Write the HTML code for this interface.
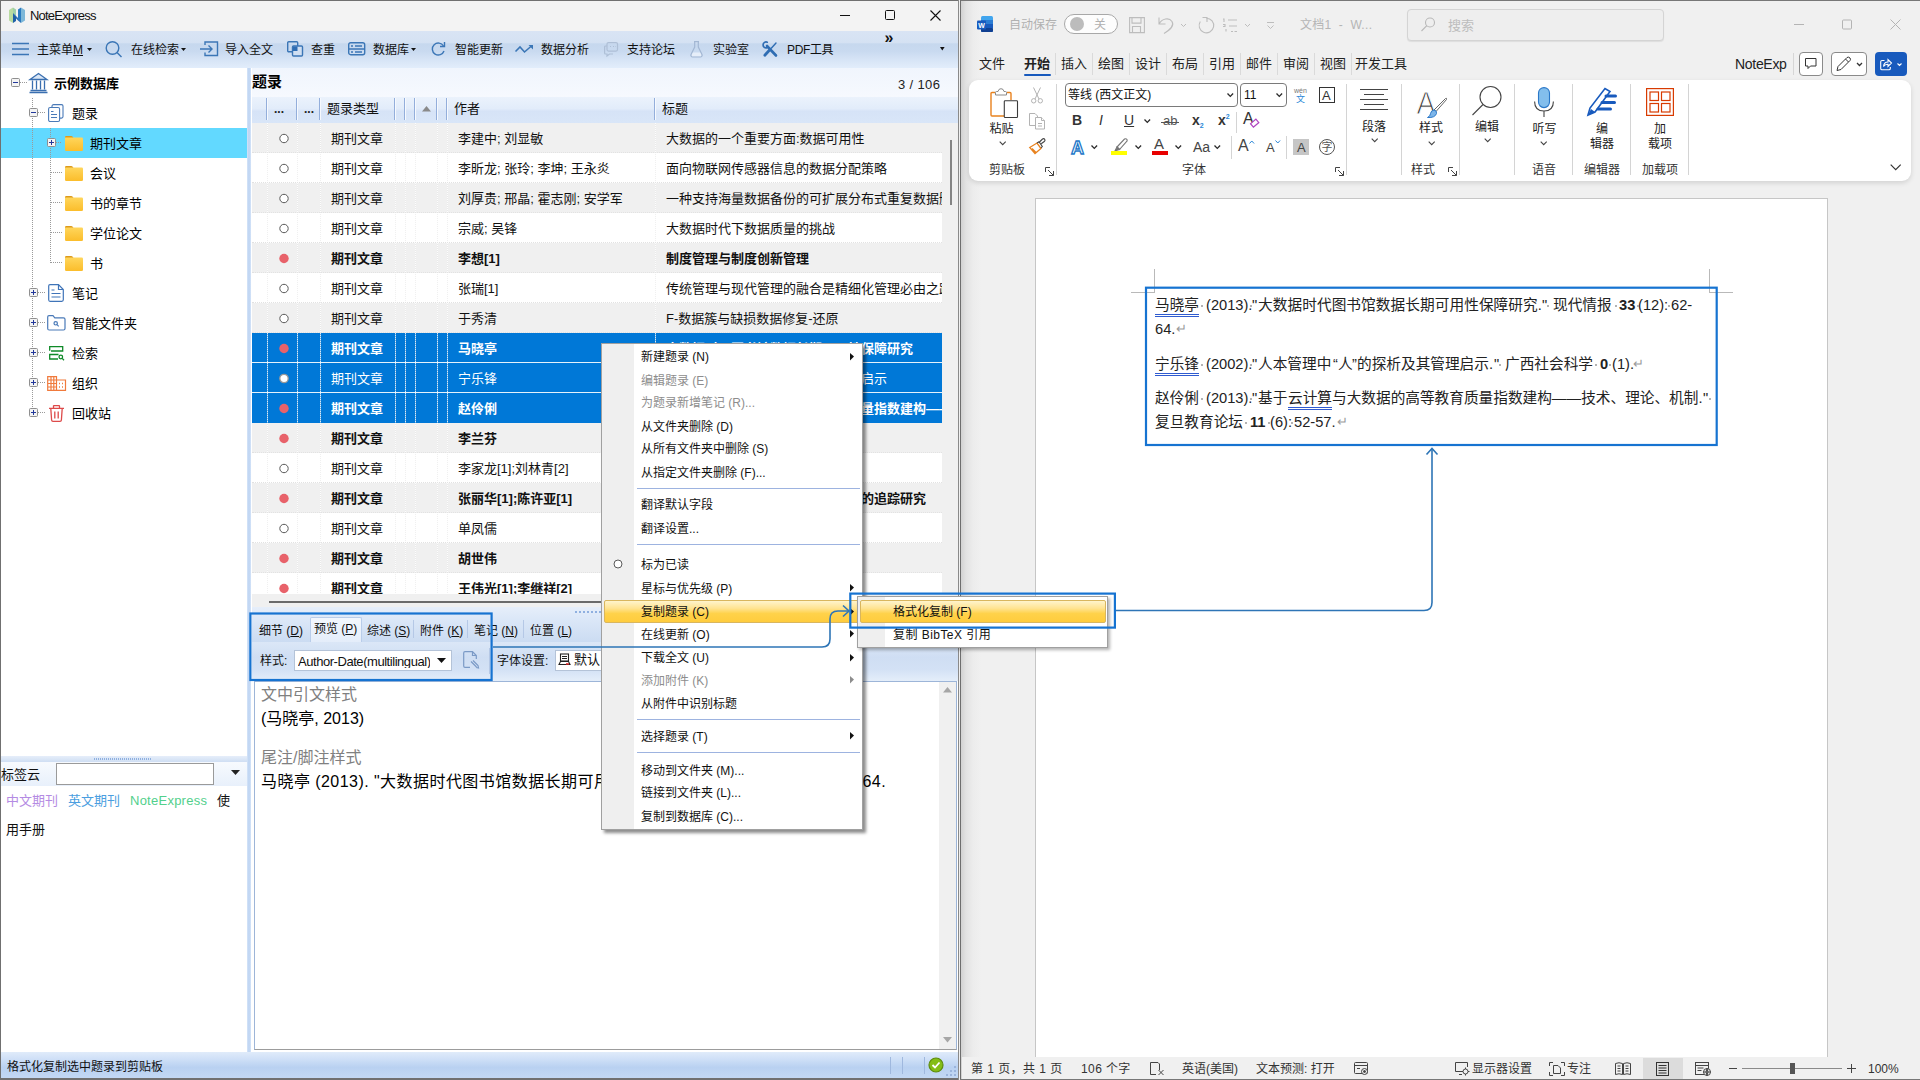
<!DOCTYPE html>
<html lang="zh-CN">
<head>
<meta charset="utf-8">
<title>NoteExpress</title>
<style>
*{box-sizing:border-box;margin:0;padding:0}
html,body{width:1920px;height:1080px;overflow:hidden;background:#f0f0f0}
body{font-family:"Liberation Sans","Noto Sans CJK SC",sans-serif;font-size:12px;color:#000;position:relative}
.a{position:absolute}
.t{position:absolute;white-space:nowrap;line-height:1}
svg{position:absolute;overflow:visible}
b{font-weight:bold}
/* ---------- NoteExpress window ---------- */
#ne{position:absolute;left:0;top:0;width:959px;height:1080px;background:#fff;overflow:hidden}
#ne-title{position:absolute;left:0;top:0;width:959px;height:31px;background:#f3f3f3}
#ne-tb{position:absolute;left:0;top:31px;width:959px;height:37px;background:linear-gradient(#d9e4f4 0%,#d5e2f3 31%,#c6d8ee 35%,#c9daf0 55%,#d9e6f7 82%,#e2edfb 100%)}
.tb{font-size:12px;top:43px;color:#111;margin-top:.5px}
.ic{stroke:#3b76b6;fill:none;stroke-width:1.4}
.vd{width:1px;background:repeating-linear-gradient(#9a9a9a 0 1px,transparent 1px 2px)}
.hd{height:1px;background:repeating-linear-gradient(90deg,#9a9a9a 0 1px,transparent 1px 2px)}
.r{position:absolute;left:0;width:690px;height:30px;font-size:13px;color:#111;white-space:nowrap;border-bottom:1px dotted #e2e2e2}
.r span{position:absolute;top:9px;line-height:1}
.r.b{font-weight:bold}
.r.s{color:#fff;border-bottom:none}
.vdl{width:1px;background:repeating-linear-gradient(rgba(255,255,255,.85) 0 1px,rgba(225,225,225,.5) 1px 2px)}
.tab{font-size:12px;color:#111;margin-top:1px}
.pv{font-size:16px;color:#000;margin-top:1px}
.mi{font-size:12px;color:#111;margin-top:1px}
.hl{background:linear-gradient(#fff4cc 0%,#ffe391 35%,#ffd24a 60%,#ffcc3d 100%);border:1px solid #d9b65e;border-radius:2px}
.wt{font-size:13px;color:#222;top:57px}
.ts{top:53px;width:1px;height:22px;background:#dadada}
.rl{font-size:12px;color:#333;top:164px}
.gs{top:84px;width:1px;height:91px;background:#d4d4d4}
.d{position:absolute;white-space:nowrap;line-height:1;font-size:14.67px;color:#222}
.gu{border-bottom:3px double #2f5bd0;padding-bottom:1px}
.pm{color:#9a9a9a;font-size:13px;margin-top:-1px}
.ws{font-size:12px;color:#333;top:1062.500px}
.q{display:inline-block;width:13px;font-style:normal;text-align:center}
.tr{margin-top:.8px}
.sp{position:absolute;width:1.500px;height:1.500px;background:#9a9a9a;border-radius:1px}
</style>
</head>
<body>
<div id="ne">
<div id="ne-title"></div>
<div id="ne-tb"></div>
<!-- app icon -->
<svg style="left:9px;top:7px" width="16" height="16" viewBox="0 0 16 16">
  <polygon points="0,3 4,0.5 4,16 0,13.5" fill="#b9dba0"/>
  <polygon points="4,0.5 7,2.5 7,10 4,7" fill="#9fd0a8"/>
  <polygon points="4,6 12,14 12,16 9,13.5 4,8.5" fill="#2f6fb5"/>
  <polygon points="4,7 7,10 7,14 4,16" fill="#1f5fa8"/>
  <polygon points="9,2.5 12,0.5 12,15 9,12" fill="#2a7ac0"/>
  <polygon points="12,0.5 16,3 16,13.5 12,16" fill="#7db7d8"/>
</svg>
<div class="t" style="left:30px;top:8.500px;font-size:13px;color:#111;letter-spacing:-.8px">NoteExpress</div>
<!-- window controls -->
<svg style="left:839px;top:9px" width="110" height="14" viewBox="0 0 110 14">
  <path d="M1 6.500h10" stroke="#111" stroke-width="1" fill="none"/>
  <rect x="46.5" y="1.5" width="9" height="9" rx="1" stroke="#111" stroke-width="1" fill="none"/>
  <path d="M91.500 1.500l10 10M101.500 1.500l-10 10" stroke="#111" stroke-width="1.100" fill="none"/>
</svg>
<!-- toolbar -->
<svg class="ic" style="left:12px;top:42px" width="18" height="14"><path d="M0 1.500h17M0 7h17M0 12.500h17"/></svg>
<div class="t tb" style="left:37px">主菜单<u>M</u></div>
<svg style="left:87px;top:48px" width="6" height="4"><polygon points="0,0 5,0 2.500,3" fill="#111"/></svg>
<svg class="ic" style="left:105px;top:40px" width="18" height="18"><circle cx="7.500" cy="8" r="6.300"/><path d="M12 12.500l4.500 4.500"/></svg>
<div class="t tb" style="left:131px">在线检索</div>
<svg style="left:181px;top:48px" width="6" height="4"><polygon points="0,0 5,0 2.500,3" fill="#111"/></svg>
<svg class="ic" style="left:200px;top:41px" width="19" height="16"><path d="M5 4V1h12.500v13.500H5v-3"/><path d="M0 8h12M8.500 4.500L12 8l-3.500 3.500"/></svg>
<div class="t tb" style="left:225px">导入全文</div>
<svg class="ic" style="left:287px;top:41px" width="17" height="16"><rect x="0.700" y="0.700" width="10" height="10" rx="1"/><rect x="5.500" y="5" width="10" height="10" rx="1" fill="#d0dff2"/><rect x="6" y="5.500" width="4.500" height="4.500" fill="#2f6db3" stroke="none"/></svg>
<div class="t tb" style="left:311px">查重</div>
<svg class="ic" style="left:348px;top:42px" width="18" height="14"><rect x="0.700" y="0.700" width="16" height="12" rx="2"/><path d="M1 7h15.500M3 4h2M7 4h7M3 10h2M7 10h7"/></svg>
<div class="t tb" style="left:373px">数据库</div>
<svg style="left:411px;top:48px" width="6" height="4"><polygon points="0,0 5,0 2.500,3" fill="#111"/></svg>
<svg class="ic" style="left:431px;top:41px" width="15" height="16"><path d="M12.500 5A6 6 0 1 0 13 10"/><path d="M13.500 1v4.500H9"/></svg>
<div class="t tb" style="left:455px">智能更新</div>
<svg class="ic" style="left:515px;top:44px" width="20" height="10"><path d="M0.500 7.500L5 3l4.500 5L17 1.500" stroke-width="1.600"/><path d="M13.500 1H18v4.500z" fill="#3b76b6" stroke="none"/></svg>
<div class="t tb" style="left:541px">数据分析</div>
<svg style="left:604px;top:42px" width="15" height="15" fill="none" stroke="#aebfd6" stroke-width="1.200"><rect x="3" y="0.600" width="10.500" height="8.500" rx="1.500"/><path d="M3 4H1.600a1 1 0 0 0-1 1v6a1 1 0 0 0 1 1H3v2l2.500-2H9"/><path d="M6 4.500h1M9 4.500h1M11 4.500h.5"/></svg>
<div class="t tb" style="left:627px">支持论坛</div>
<svg style="left:690px;top:41px" width="13" height="17" fill="none" stroke="#a3b7d3" stroke-width="1.200"><path d="M2.500 11.500h8l1 2.500q.3 1.500-1.200 1.500H2.700q-1.500 0-1.200-1.500z" fill="#e6eef9" stroke="none"/><path d="M4 0.600h5M4.700 1v5L1 13.500a1.800 1.800 0 0 0 1.700 2.500h7.600a1.800 1.800 0 0 0 1.700-2.500L8.300 6V1"/></svg>
<div class="t tb" style="left:713px">实验室</div>
<svg style="left:762px;top:41px" width="17" height="17" fill="none" stroke="#2f6db3" stroke-linecap="round"><path d="M5 5l9 9.500" stroke-width="2.600"/><path d="M5.300 1.200a3 3 0 1 0 -0.300 5.600" stroke-width="1.700"/><path d="M14 2L9.500 7" stroke-width="1.400"/><path d="M8.300 8.300L2.800 14.200" stroke-width="2.800"/></svg>
<div class="t tb" style="left:787px;letter-spacing:-.35px">PDF工具</div>
<div class="t" style="left:884.500px;top:30px;font-size:16px;font-weight:bold;color:#111">»</div>
<svg style="left:939.500px;top:46.500px" width="6" height="4"><polygon points="0,0 4.600,0 2.300,3.500" fill="#111"/></svg>
<!-- ===== tree panel ===== -->
<div class="a" style="left:1px;top:68px;width:246px;height:985px;background:#fff"></div>
<div class="a" style="left:1px;top:128px;width:246px;height:30px;background:#62d9ff"></div>
<div class="a vd" style="left:32px;top:98px;height:315px"></div>
<div class="a vd" style="left:50px;top:128px;height:136px"></div>
<svg width="0" height="0"><defs><linearGradient id="fg" x1="0" y1="0" x2="0" y2="1"><stop offset="0" stop-color="#ffd65c"/><stop offset="1" stop-color="#fbbd2b"/></linearGradient></defs></svg>
<div class="a hd" style="left:20px;top:82px;width:7px"></div>
<svg style="left:11px;top:78px" width="9" height="9"><rect x="0.500" y="0.500" width="8" height="8" rx="1" fill="#f4f4f4" stroke="#8f8f8f"/><path d="M2 4.500h5" stroke="#23399b" stroke-width="1" fill="none"/></svg>
<svg style="left:29px;top:72px" width="19" height="22" fill="none" stroke="#3a6fb0" stroke-width="1.300"><path d="M1 7.500L9.500 1.500L18 7.500z" fill="#dbe7f6"/><path d="M3.500 8.500v9M7.500 8.500v9M11.500 8.500v9M15.500 8.500v9"/><path d="M1.500 18.500h16M0.500 20.500h18" stroke-width="1.600"/></svg>
<div class="t tr" style="left:54px;top:76px;font-size:13px;font-weight:bold">示例数据库</div>
<div class="a hd" style="left:38px;top:112px;width:8px"></div>
<svg style="left:29px;top:108px" width="9" height="9"><rect x="0.500" y="0.500" width="8" height="8" rx="1" fill="#f4f4f4" stroke="#8f8f8f"/><path d="M2 4.500h5" stroke="#23399b" stroke-width="1" fill="none"/></svg>
<svg style="left:48px;top:104px" width="16" height="18" fill="#fff" stroke="#4a7ab8" stroke-width="1.100"><rect x="4" y="0.600" width="11" height="13.500" rx="1.500"/><rect x="0.600" y="3.500" width="11" height="14" rx="1.500"/><path d="M3 7.500h2.500M3 10.500h6M3 13.500h6"/></svg>
<div class="t tr" style="left:72px;top:106px;font-size:13px">题录</div>
<div class="a hd" style="left:56px;top:142px;width:6px"></div>
<svg style="left:47px;top:138px" width="9" height="9"><rect x="0.500" y="0.500" width="8" height="8" rx="1" fill="#f4f4f4" stroke="#8f8f8f"/><path d="M2 4.500h5M4.500 2v5" stroke="#23399b" stroke-width="1" fill="none"/></svg>
<svg style="left:65px;top:136px" width="18" height="15"><path d="M0 1.200Q0 0 1.200 0H6.300Q7 0 7.500 .6L8.500 2H0z" fill="#dc9a1c"/><path d="M0 1.500H16.800Q18 1.500 18 2.700V13.800Q18 15 16.800 15H1.200Q0 15 0 13.800z" fill="url(#fg)"/></svg>
<div class="t tr" style="left:90px;top:136px;font-size:13px">期刊文章</div>
<div class="a hd" style="left:51px;top:172px;width:11px"></div>
<svg style="left:65px;top:166px" width="18" height="15"><path d="M0 1.200Q0 0 1.200 0H6.300Q7 0 7.500 .6L8.500 2H0z" fill="#dc9a1c"/><path d="M0 1.500H16.800Q18 1.500 18 2.700V13.800Q18 15 16.800 15H1.200Q0 15 0 13.800z" fill="url(#fg)"/></svg>
<div class="t tr" style="left:90px;top:166px;font-size:13px">会议</div>
<div class="a hd" style="left:51px;top:202px;width:11px"></div>
<svg style="left:65px;top:196px" width="18" height="15"><path d="M0 1.200Q0 0 1.200 0H6.300Q7 0 7.500 .6L8.500 2H0z" fill="#dc9a1c"/><path d="M0 1.500H16.800Q18 1.500 18 2.700V13.800Q18 15 16.800 15H1.200Q0 15 0 13.800z" fill="url(#fg)"/></svg>
<div class="t tr" style="left:90px;top:196px;font-size:13px">书的章节</div>
<div class="a hd" style="left:51px;top:232px;width:11px"></div>
<svg style="left:65px;top:226px" width="18" height="15"><path d="M0 1.200Q0 0 1.200 0H6.300Q7 0 7.500 .6L8.500 2H0z" fill="#dc9a1c"/><path d="M0 1.500H16.800Q18 1.500 18 2.700V13.800Q18 15 16.800 15H1.200Q0 15 0 13.800z" fill="url(#fg)"/></svg>
<div class="t tr" style="left:90px;top:226px;font-size:13px">学位论文</div>
<div class="a hd" style="left:51px;top:262px;width:11px"></div>
<svg style="left:65px;top:256px" width="18" height="15"><path d="M0 1.200Q0 0 1.200 0H6.300Q7 0 7.500 .6L8.500 2H0z" fill="#dc9a1c"/><path d="M0 1.500H16.800Q18 1.500 18 2.700V13.800Q18 15 16.800 15H1.200Q0 15 0 13.800z" fill="url(#fg)"/></svg>
<div class="t tr" style="left:90px;top:256px;font-size:13px">书</div>
<div class="a hd" style="left:38px;top:292px;width:7px"></div>
<svg style="left:29px;top:288px" width="9" height="9"><rect x="0.500" y="0.500" width="8" height="8" rx="1" fill="#f4f4f4" stroke="#8f8f8f"/><path d="M2 4.500h5M4.500 2v5" stroke="#23399b" stroke-width="1" fill="none"/></svg>
<svg style="left:48px;top:284px" width="16" height="18" fill="none" stroke="#3f74b8" stroke-width="1.200"><path d="M2 0.700H10.500L15.300 5.500V15.800Q15.300 17.300 13.800 17.300H2Q0.700 17.300 0.700 15.800V2Q0.700 0.700 2 0.700z"/><path d="M10.500 1V5.500H15"/><path d="M3.500 6h3M3.500 9.500h9M3.500 13h9"/></svg>
<div class="t tr" style="left:72px;top:286px;font-size:13px">笔记</div>
<div class="a hd" style="left:38px;top:322px;width:7px"></div>
<svg style="left:29px;top:318px" width="9" height="9"><rect x="0.500" y="0.500" width="8" height="8" rx="1" fill="#f4f4f4" stroke="#8f8f8f"/><path d="M2 4.500h5M4.500 2v5" stroke="#23399b" stroke-width="1" fill="none"/></svg>
<svg style="left:47px;top:315px" width="19" height="16" fill="none" stroke="#4a7ab8" stroke-width="1.200"><path d="M0.700 3V2Q0.700 0.700 2 0.700H6L7.800 2.800H16.500Q18 2.800 18 4.300V13.500Q18 15 16.500 15H2.200Q0.700 15 0.700 13.500z"/><circle cx="8.700" cy="8.300" r="1.700"/><path d="M10 9.700l1.700 1.700"/></svg>
<div class="t tr" style="left:72px;top:316px;font-size:13px">智能文件夹</div>
<div class="a hd" style="left:38px;top:352px;width:7px"></div>
<svg style="left:29px;top:348px" width="9" height="9"><rect x="0.500" y="0.500" width="8" height="8" rx="1" fill="#f4f4f4" stroke="#8f8f8f"/><path d="M2 4.500h5M4.500 2v5" stroke="#23399b" stroke-width="1" fill="none"/></svg>
<svg style="left:49px;top:346px" width="16" height="15" fill="none" stroke="#0f8a28" stroke-width="1.300"><path d="M0.700 4.700V0.700H13.700V5H2"/><path d="M9.500 8.500H0.700V13H9"/><circle cx="11.800" cy="11" r="1.800"/><path d="M13.200 12.400l1.800 1.800"/></svg>
<div class="t tr" style="left:72px;top:346px;font-size:13px">检索</div>
<div class="a hd" style="left:38px;top:382px;width:7px"></div>
<svg style="left:29px;top:378px" width="9" height="9"><rect x="0.500" y="0.500" width="8" height="8" rx="1" fill="#f4f4f4" stroke="#8f8f8f"/><path d="M2 4.500h5M4.500 2v5" stroke="#23399b" stroke-width="1" fill="none"/></svg>
<svg style="left:47px;top:376px" width="20" height="15" fill="none" stroke="#f07a3c" stroke-width="1.200"><path d="M0.700 0.700H9.500V14.300H0.700zM9.500 4H18.500V14.300H9.500M0.700 4H9.500M0.700 7.500H9.500M0.700 11H9.500M4 0.700V14.300M6.800 0.700V14.300"/><path d="M12 7.500h1M15 7.500h1M12 11h1M15 11h1" stroke-width="1.400"/></svg>
<div class="t tr" style="left:72px;top:376px;font-size:13px">组织</div>
<div class="a hd" style="left:38px;top:412px;width:7px"></div>
<svg style="left:29px;top:408px" width="9" height="9"><rect x="0.500" y="0.500" width="8" height="8" rx="1" fill="#f4f4f4" stroke="#8f8f8f"/><path d="M2 4.500h5M4.500 2v5" stroke="#23399b" stroke-width="1" fill="none"/></svg>
<svg style="left:49px;top:405px" width="15" height="17" fill="none" stroke="#dd4a4a" stroke-width="1.300"><path d="M0 3.300H15M4.500 3V1.200Q4.500 0.700 5 0.700H10Q10.500 0.700 10.500 1.200V3"/><path d="M1.800 3.500L2.600 15Q2.700 16.300 4 16.300H11Q12.300 16.300 12.400 15L13.200 3.500"/><path d="M5.800 6.500v7M9.200 6.500v7"/></svg>
<div class="t tr" style="left:72px;top:406px;font-size:13px">回收站</div>
<div class="a" style="left:247px;top:68px;width:4px;height:985px;background:linear-gradient(90deg,#d5e4f8,#bcd3f2 50%,#d5e4f8)"></div>
<!-- ===== main panel: header + table ===== -->
<div class="a" style="left:252px;top:68px;width:707px;height:29px;background:linear-gradient(#f0f5fd,#f6f9fe)"></div>
<div class="t" style="left:252px;top:74px;font-size:15px;font-weight:bold">题录</div>
<div class="t" style="left:898px;top:78px;font-size:13px;color:#222;letter-spacing:.35px">3 / 106</div>
<div class="a" style="left:252px;top:97px;width:707px;height:26px;background:linear-gradient(#ebf2fc 0%,#e2ecfa 45%,#d6e3f7 55%,#d9e6f8 100%)"></div>
<div class="a" style="left:266px;top:98px;width:1px;height:22px;background:#93aedb"></div><div class="a" style="left:267px;top:98px;width:1px;height:22px;background:#f6f9fe"></div>
<div class="a" style="left:296px;top:98px;width:1px;height:22px;background:#93aedb"></div><div class="a" style="left:297px;top:98px;width:1px;height:22px;background:#f6f9fe"></div>
<div class="a" style="left:319px;top:98px;width:1px;height:22px;background:#93aedb"></div><div class="a" style="left:320px;top:98px;width:1px;height:22px;background:#f6f9fe"></div>
<div class="a" style="left:394px;top:98px;width:1px;height:22px;background:#93aedb"></div><div class="a" style="left:395px;top:98px;width:1px;height:22px;background:#f6f9fe"></div>
<div class="a" style="left:404px;top:98px;width:1px;height:22px;background:#93aedb"></div><div class="a" style="left:405px;top:98px;width:1px;height:22px;background:#f6f9fe"></div>
<div class="a" style="left:414px;top:98px;width:1px;height:22px;background:#93aedb"></div><div class="a" style="left:415px;top:98px;width:1px;height:22px;background:#f6f9fe"></div>
<div class="a" style="left:436px;top:98px;width:1px;height:22px;background:#93aedb"></div><div class="a" style="left:437px;top:98px;width:1px;height:22px;background:#f6f9fe"></div>
<div class="a" style="left:446px;top:98px;width:1px;height:22px;background:#93aedb"></div><div class="a" style="left:447px;top:98px;width:1px;height:22px;background:#f6f9fe"></div>
<div class="a" style="left:654px;top:98px;width:1px;height:22px;background:#93aedb"></div><div class="a" style="left:655px;top:98px;width:1px;height:22px;background:#f6f9fe"></div>
<div class="t" style="left:274px;top:102.500px;font-size:12px;font-weight:bold;color:#222">...</div>
<div class="t" style="left:304px;top:102.500px;font-size:12px;font-weight:bold;color:#222">...</div>
<div class="t" style="left:327px;top:102px;font-size:13px;color:#111">题录类型</div>
<svg style="left:422px;top:106px" width="10" height="6"><polygon points="0,5.500 4.500,0 9,5.500" fill="#8a8a8a"/></svg>
<div class="t" style="left:454px;top:102px;font-size:13px;color:#111">作者</div>
<div class="t" style="left:662px;top:102px;font-size:13px;color:#111">标题</div>
<div class="a" id="tbl" style="left:252px;top:123px;width:690px;height:471px;overflow:hidden;background:#fff">
<div class="r" style="top:0px;background:#f0f0f0">
<svg style="left:27px;top:10px" width="10" height="11"><circle cx="5" cy="5.500" r="4.200" fill="#fff" stroke="#5a5a5a" stroke-width="1"/></svg>
<span style="left:79px">期刊文章</span><span style="left:206px">李建中; 刘显敏</span><span style="left:414px">大数据的一个重要方面:数据可用性</span></div>
<div class="r" style="top:30px;background:#fff">
<svg style="left:27px;top:10px" width="10" height="11"><circle cx="5" cy="5.500" r="4.200" fill="#fff" stroke="#5a5a5a" stroke-width="1"/></svg>
<span style="left:79px">期刊文章</span><span style="left:206px">李昕龙; 张玲; 李坤; 王永炎</span><span style="left:414px">面向物联网传感器信息的数据分配策略</span></div>
<div class="r" style="top:60px;background:#f0f0f0">
<svg style="left:27px;top:10px" width="10" height="11"><circle cx="5" cy="5.500" r="4.200" fill="#fff" stroke="#5a5a5a" stroke-width="1"/></svg>
<span style="left:79px">期刊文章</span><span style="left:206px">刘厚贵; 邢晶; 霍志刚; 安学军</span><span style="left:414px">一种支持海量数据备份的可扩展分布式重复数据删除系统</span></div>
<div class="r" style="top:90px;background:#fff">
<svg style="left:27px;top:10px" width="10" height="11"><circle cx="5" cy="5.500" r="4.200" fill="#fff" stroke="#5a5a5a" stroke-width="1"/></svg>
<span style="left:79px">期刊文章</span><span style="left:206px">宗威; 吴锋</span><span style="left:414px">大数据时代下数据质量的挑战</span></div>
<div class="r b" style="top:120px;background:#f0f0f0">
<svg style="left:27px;top:10px" width="10" height="11"><circle cx="5" cy="5.500" r="4.700" fill="#e8626a"/></svg>
<span style="left:79px">期刊文章</span><span style="left:206px">李想[1]</span><span style="left:414px">制度管理与制度创新管理</span></div>
<div class="r" style="top:150px;background:#fff">
<svg style="left:27px;top:10px" width="10" height="11"><circle cx="5" cy="5.500" r="4.200" fill="#fff" stroke="#5a5a5a" stroke-width="1"/></svg>
<span style="left:79px">期刊文章</span><span style="left:206px">张瑞[1]</span><span style="left:414px">传统管理与现代管理的融合是精细化管理必由之路</span></div>
<div class="r" style="top:180px;background:#f0f0f0">
<svg style="left:27px;top:10px" width="10" height="11"><circle cx="5" cy="5.500" r="4.200" fill="#fff" stroke="#5a5a5a" stroke-width="1"/></svg>
<span style="left:79px">期刊文章</span><span style="left:206px">于秀清</span><span style="left:414px">F-数据簇与缺损数据修复-还原</span></div>
<div class="r b s" style="top:210px;background:#0078d7">
<svg style="left:27px;top:10px" width="10" height="11"><circle cx="5" cy="5.500" r="4.700" fill="#e8626a"/></svg>
<span style="left:79px">期刊文章</span><span style="left:206px">马晓亭</span><span style="left:414px">大数据时代图书馆数据长期可用性保障研究</span></div>
<div class="r s" style="top:240px;background:#0078d7">
<svg style="left:27px;top:10px" width="10" height="11"><circle cx="5" cy="5.500" r="4.200" fill="#fff" stroke="#999" stroke-width="1.300"/></svg>
<span style="left:79px">期刊文章</span><span style="left:206px">宁乐锋</span><span style="left:414px">人本管理中<i class="q">“</i>人<i class="q">”</i>的探析及其管理启示</span></div>
<div class="r b s" style="top:270px;background:#0078d7">
<svg style="left:27px;top:10px" width="10" height="11"><circle cx="5" cy="5.500" r="4.700" fill="#e8626a"/></svg>
<span style="left:79px">期刊文章</span><span style="left:206px">赵伶俐</span><span style="left:414px">基于云计算与大数据的高等教育质量指数建构——技术、理论、机制</span></div>
<div class="r b" style="top:300px;background:#f0f0f0">
<svg style="left:27px;top:10px" width="10" height="11"><circle cx="5" cy="5.500" r="4.700" fill="#e8626a"/></svg>
<span style="left:79px">期刊文章</span><span style="left:206px">李兰芬</span><span style="left:414px">论管理伦理的价值取向</span></div>
<div class="r" style="top:330px;background:#fff">
<svg style="left:27px;top:10px" width="10" height="11"><circle cx="5" cy="5.500" r="4.200" fill="#fff" stroke="#5a5a5a" stroke-width="1"/></svg>
<span style="left:79px">期刊文章</span><span style="left:206px">李家龙[1];刘林青[2]</span><span style="left:414px">管理学研究方法述评</span></div>
<div class="r b" style="top:360px;background:#f0f0f0">
<svg style="left:27px;top:10px" width="10" height="11"><circle cx="5" cy="5.500" r="4.700" fill="#e8626a"/></svg>
<span style="left:79px">期刊文章</span><span style="left:206px">张丽华[1];陈许亚[1]</span><span style="left:414px">中国管理学科研究热点与发展趋势的追踪研究</span></div>
<div class="r" style="top:390px;background:#fff">
<svg style="left:27px;top:10px" width="10" height="11"><circle cx="5" cy="5.500" r="4.200" fill="#fff" stroke="#5a5a5a" stroke-width="1"/></svg>
<span style="left:79px">期刊文章</span><span style="left:206px">单凤儒</span><span style="left:414px">管理学基础理论探讨</span></div>
<div class="r b" style="top:420px;background:#f0f0f0">
<svg style="left:27px;top:10px" width="10" height="11"><circle cx="5" cy="5.500" r="4.700" fill="#e8626a"/></svg>
<span style="left:79px">期刊文章</span><span style="left:206px">胡世伟</span><span style="left:414px">现代企业管理创新</span></div>
<div class="r b" style="top:450px;background:#fff">
<svg style="left:27px;top:10px" width="10" height="11"><circle cx="5" cy="5.500" r="4.700" fill="#e8626a"/></svg>
<span style="left:79px">期刊文章</span><span style="left:206px">王伟光[1];李继祥[2]</span><span style="left:414px">管理创新与制度</span></div>
<div class="a vdl" style="left:15px;top:0;height:480px"></div>
<div class="a vdl" style="left:45px;top:0;height:480px"></div>
<div class="a vdl" style="left:68px;top:0;height:480px"></div>
<div class="a vdl" style="left:143px;top:0;height:480px"></div>
<div class="a vdl" style="left:153px;top:0;height:480px"></div>
<div class="a vdl" style="left:163px;top:0;height:480px"></div>
<div class="a vdl" style="left:185px;top:0;height:480px"></div>
<div class="a vdl" style="left:195px;top:0;height:480px"></div>
<div class="a vdl" style="left:403px;top:0;height:480px"></div>
<div class="a" style="left:0;top:239px;width:690px;height:1px;background:rgba(255,255,255,.9)"></div>
<div class="a" style="left:0;top:269px;width:690px;height:1px;background:rgba(255,255,255,.9)"></div>
</div>
<div class="a" style="left:942px;top:123px;width:17px;height:484px;background:#f0f0f0"></div>
<div class="a" style="left:950px;top:140px;width:2px;height:65px;background:#858585"></div>
<div class="a" style="left:252px;top:594px;width:690px;height:13px;background:#f0f0f0"></div>
<div class="a" style="left:269px;top:601px;width:600px;height:2px;background:#6b6b6b"></div>
<!-- ===== bottom panel ===== -->
<div class="a" style="left:252px;top:607px;width:707px;height:38px;background:linear-gradient(#e6eefa 0%,#dce8f8 30%,#c9daf1 100%)"></div>
<div class="a" style="left:575px;top:611px;width:26px;height:2px;background:repeating-linear-gradient(90deg,#8fb0e0 0 2px,transparent 2px 4px)"></div>
<div class="a" style="left:252px;top:642px;width:707px;height:39px;background:linear-gradient(#dbe7f7 0%,#cfdef3 40%,#d3e1f5 70%,#e4eefa 100%)"></div>
<div class="a" style="left:310px;top:617px;width:52px;height:25px;background:linear-gradient(#f3f7fd,#e4edfa);border:1px solid #b9cdea;border-bottom:none;border-radius:2px 2px 0 0"></div>
<div class="t tab" style="left:259px;top:624px">细节 (<u>D</u>)</div>
<div class="t tab" style="left:314px;top:622px">预览 (<u>P</u>)</div>
<div class="t tab" style="left:367px;top:624px">综述 (<u>S</u>)</div>
<div class="t tab" style="left:420px;top:624px">附件 (<u>K</u>)</div>
<div class="t tab" style="left:474px;top:624px">笔记 (<u>N</u>)</div>
<div class="t tab" style="left:530px;top:624px">位置 (<u>L</u>)</div>
<div class="a" style="left:413px;top:620px;width:1px;height:18px;background:#b5c8e6"></div>
<div class="a" style="left:467px;top:620px;width:1px;height:18px;background:#b5c8e6"></div>
<div class="a" style="left:523px;top:620px;width:1px;height:18px;background:#b5c8e6"></div>
<div class="t" style="left:260px;top:655px;font-size:12px;color:#111">样式:</div>
<div class="a" style="left:294px;top:650px;width:158px;height:21px;background:#fff;border:1px solid #b4c3d8;overflow:hidden"><div class="t" style="left:3px;top:4px;font-size:13px;color:#111;width:132px;overflow:hidden;letter-spacing:-.45px">Author-Date(multilingual)</div></div>
<svg style="left:437px;top:658px" width="10" height="6"><polygon points="0,0 9,0 4.500,5" fill="#111"/></svg>
<svg style="left:463px;top:651px" width="17" height="18" fill="none" stroke="#7b9ac6" stroke-width="1.200"><path d="M7 16.300H2Q0.700 16.300 0.700 15V2Q0.700 0.700 2 0.700H9.500L13.300 4.500V8"/><path d="M9.500 1V4.500H13"/><path d="M8 10.500l5.500 5.500M10 9.500l5 5l0.500 2.500l-2.500-0.500"/></svg>
<div class="a" style="left:489px;top:648px;width:1px;height:26px;background:#b5c8e6"></div>
<div class="t" style="left:497px;top:655px;font-size:12px;color:#111">字体设置:</div>
<div class="a" style="left:555px;top:650px;width:120px;height:21px;background:#fff;border:1px solid #b4c3d8"></div>
<svg style="left:558px;top:653px" width="14" height="14" fill="none" stroke="#222" stroke-width="1.100"><rect x="2.500" y="1" width="8" height="7"/><path d="M4 3.500h5M4 5.500h5M1 11.500l1.500-3h8l1.500 3z"/><path d="M8 11h3" stroke="#d22" stroke-width="1.500"/></svg>
<div class="t" style="left:574px;top:653px;font-size:13px;color:#111">默认</div>
<!-- preview pane -->
<div class="a" style="left:254px;top:681px;width:703px;height:369px;background:#fff;border:1px solid #9db5d8;border-bottom-color:#9c9c9c"></div>
<div class="a" style="left:939px;top:682px;width:17px;height:367px;background:#f0f0f0"></div>
<svg style="left:943px;top:687px" width="10" height="6"><polygon points="0,5.500 4.500,0 9,5.500" fill="#a6a6a6"/></svg>
<svg style="left:943px;top:1037px" width="10" height="6"><polygon points="0,0 9,0 4.500,5.500" fill="#a6a6a6"/></svg>
<div class="t pv" style="left:261px;top:686px;color:#808080">文中引文样式</div>
<div class="t pv" style="left:261px;top:710px">(马晓亭, 2013)</div>
<div class="t pv" style="left:261px;top:749px;color:#808080">尾注/脚注样式</div>
<div class="t pv" id="pvl" style="left:261px;top:773px;letter-spacing:.45px">马晓亭 (2013). "大数据时代图书馆数据长期可用性保障研究." 现代情报 33(12): 62-64.</div>
<!-- tag cloud -->
<div class="a" style="left:1px;top:756px;width:246px;height:6px;background:linear-gradient(#e6eefa,#cfdef3)"></div>
<div class="a" style="left:1px;top:762px;width:246px;height:24px;background:linear-gradient(#f7fafe,#e8f0fb)"></div>
<div class="a" style="left:94px;top:758px;width:58px;height:2px;background:repeating-linear-gradient(90deg,#8fb0e0 0 1px,transparent 1px 2px)"></div>
<div class="t" style="left:1px;top:768px;font-size:13px;color:#111">标签云</div>
<div class="a" style="left:56px;top:763px;width:158px;height:22px;background:#fff;border:1px solid #9a9a9a"></div>
<svg style="left:231px;top:770px" width="10" height="6"><polygon points="0,0 9,0 4.500,5" fill="#222"/></svg>
<div class="t" style="left:6px;top:794.300px;font-size:13px;color:#b48be3">中文期刊</div>
<div class="t" style="left:68px;top:794.300px;font-size:13px;color:#4a9ee0">英文期刊</div>
<div class="t" style="left:130px;top:794.300px;font-size:13px;color:#52d08c;letter-spacing:.25px">NoteExpress</div>
<div class="t" style="left:217px;top:794.300px;font-size:13px;color:#111">使</div>
<div class="t" style="left:6px;top:823.300px;font-size:13px;color:#111">用手册</div>
<!-- status bar -->
<div class="a" style="left:1px;top:1052px;width:958px;height:28px;background:linear-gradient(#e0ebfa 0%,#cfe0f7 25%,#b9d1f1 55%,#c4d9f4 100%)"></div>
<div class="t" style="left:7px;top:1060px;font-size:12px;margin-top:.5px;color:#111">格式化复制选中题录到剪贴板</div>
<div class="a" style="left:890px;top:1057px;width:1px;height:17px;background:#9fb8de"></div>
<div class="a" style="left:902px;top:1057px;width:1px;height:17px;background:#9fb8de"></div>
<div class="a" style="left:924px;top:1057px;width:1px;height:17px;background:#9fb8de"></div>
<svg style="left:928px;top:1057px" width="16" height="16"><circle cx="8" cy="8" r="7" fill="#84bd16" stroke="#5d8c0c" stroke-width="1.200"/><path d="M4.500 8l2.500 2.500l4.500-5" fill="none" stroke="#fff" stroke-width="1.800"/></svg>
<svg style="left:946px;top:1066px" width="12" height="12" fill="#9ab4dc"><rect x="8" y="0" width="2" height="2"/><rect x="4" y="4" width="2" height="2"/><rect x="8" y="4" width="2" height="2"/><rect x="0" y="8" width="2" height="2"/><rect x="4" y="8" width="2" height="2"/><rect x="8" y="8" width="2" height="2"/></svg>
<div class="a" style="left:0;top:1078px;width:959px;height:2px;background:#707070"></div>
<!-- window edges -->
<div class="a" style="left:0;top:0;width:959px;height:1px;background:#707070"></div>
<div class="a" style="left:0;top:0;width:1px;height:1080px;background:#707070"></div>
<div class="a" style="left:958px;top:0;width:1px;height:1080px;background:#8a8a8a"></div>
</div>
<!-- ===== Word window ===== -->
<div id="wd" class="a" style="left:960px;top:0;width:960px;height:1080px;background:#f0f0f0;overflow:hidden"></div>
<div class="a" style="left:960px;top:0;width:960px;height:1px;background:#777"></div>
<div class="a" style="left:960px;top:0;width:1px;height:1080px;background:#6e6e6e"></div>
<div class="a" style="left:961px;top:1px;width:20px;height:1079px;background:linear-gradient(90deg,#d2d2d2 0,#e2e2e2 25%,#ececec 60%,#f0f0f0 100%)"></div>
<!-- title bar -->
<svg style="left:977px;top:16px" width="16" height="17"><rect x="4" y="0" width="12" height="16" rx="1.500" fill="#41a5ee"/><rect x="4" y="4" width="12" height="4" fill="#2b7cd3"/><rect x="4" y="8" width="12" height="4" fill="#185abd"/><rect x="4" y="12" width="12" height="4" rx="1" fill="#103f91"/><rect x="0" y="4.500" width="9" height="9" rx="1" fill="#185abd"/><text x="4.500" y="11.800" font-size="7" font-weight="bold" fill="#fff" text-anchor="middle" font-family="Liberation Sans, sans-serif">W</text></svg>
<div class="t" style="left:1009px;top:19px;font-size:12px;color:#b1b1b1">自动保存</div>
<div class="a" style="left:1064px;top:14px;width:54px;height:20px;border:1px solid #a8a8a8;border-radius:10px;background:#fdfdfd"></div>
<div class="a" style="left:1070px;top:17px;width:14px;height:14px;border-radius:7px;background:#bcbcbc"></div>
<div class="t" style="left:1094px;top:19px;font-size:12px;color:#b1b1b1">关</div>
<svg style="left:1129px;top:17px" width="150" height="17" fill="none" stroke="#bdbdbd" stroke-width="1.100">
  <path d="M0.600 0.600h14.800v15H0.600z M3 0.600v5.500h9V0.600 M3.500 15.500v-6h8v6"/>
  <path d="M30 0.500v6.500h6.500 M30 7C33 1.500 40 0 43 4.500C45.500 8.500 42 12 35 16.500"/>
  <path d="M52 7l2.500 2.500l2.500-2.500" stroke-width="1"/>
  <path d="M77.500 1.200a7.300 7.300 0 1 1-6.200 3.300"/><path d="M73.500 0.500h4.500v4.500"/>
  <path d="M94 2h1v3 M99 3h9 M94 7.500h2v2h-2 M100 9h8 M97 12v2.500 M102 14.500h2 M105.500 14.500h2.500" />
  <path d="M116 7l2.500 2.500l2.500-2.500" stroke-width="1"/>
  <path d="M138 5.500h7 M138.500 8.500l3 3l3-3" stroke-width="1"/>
</svg>
<div class="t" style="left:1300px;top:19px;font-size:12px;color:#b5b5b5;letter-spacing:.3px">文档1&nbsp; -&nbsp; W...</div>
<div class="a" style="left:1407px;top:9px;width:257px;height:32px;border:1px solid #d4d4d4;border-radius:4px;background:#eeeeee;box-shadow:0 1px 1px rgba(0,0,0,.08)"></div>
<svg style="left:1421px;top:17px" width="15" height="15" fill="none" stroke="#b8b8b8" stroke-width="1.100"><circle cx="9" cy="5.500" r="4.500"/><path d="M5.800 8.700L0.500 14"/></svg>
<div class="t" style="left:1448px;top:18.500px;font-size:13px;color:#bdbdbd">搜索</div>
<svg style="left:1794px;top:19px" width="110" height="12" fill="none" stroke="#b4b4b4" stroke-width="1"><path d="M0 5.500h10"/><rect x="48.500" y="1" width="9" height="9" rx="1"/><path d="M96.500 0.500l10 10M106.500 0.500l-10 10"/></svg>
<!-- tab row -->
<div class="t wt" style="left:979px">文件</div>
<div class="t wt" style="left:1024px;font-weight:bold">开始</div>
<div class="a" style="left:1024px;top:74px;width:27px;height:2px;background:#185abd;border-radius:1px"></div>
<div class="t wt" style="left:1061px">插入</div>
<div class="t wt" style="left:1098px">绘图</div>
<div class="t wt" style="left:1135px">设计</div>
<div class="t wt" style="left:1172px">布局</div>
<div class="t wt" style="left:1209px">引用</div>
<div class="t wt" style="left:1246px">邮件</div>
<div class="t wt" style="left:1283px">审阅</div>
<div class="t wt" style="left:1320px">视图</div>
<div class="t wt" style="left:1355px">开发工具</div>
<div class="a ts" style="left:1055px"></div><div class="a ts" style="left:1092px"></div><div class="a ts" style="left:1129px"></div><div class="a ts" style="left:1166px"></div><div class="a ts" style="left:1203px"></div><div class="a ts" style="left:1240px"></div><div class="a ts" style="left:1277px"></div><div class="a ts" style="left:1314px"></div><div class="a ts" style="left:1351px"></div>
<div class="t" style="left:1735px;top:57px;font-size:14px;color:#222;letter-spacing:-.3px">NoteExp</div>
<div class="a" style="left:1793px;top:53px;width:1px;height:22px;background:#d6d6d6"></div>
<div class="a" style="left:1799px;top:52px;width:24px;height:24px;border:1px solid #8a8a8a;border-radius:4px;background:#fff"></div>
<svg style="left:1805px;top:58px" width="12" height="12" fill="none" stroke="#333" stroke-width="1"><path d="M0.500 0.500h10.500v7.500H5.500L3 10.500V8H0.500z"/></svg>
<div class="a" style="left:1831px;top:52px;width:36px;height:24px;border:1px solid #8a8a8a;border-radius:4px;background:#fff"></div>
<svg style="left:1836px;top:56px" width="28" height="16" fill="none" stroke="#333" stroke-width="1"><path d="M1 14.500l1-4L11 1.500q1.500-1 3 .5q1 1.500 0 2.500L5 13.500z M9.500 3l3 3"/><path d="M21 7l2.500 2.500l2.500-2.500" stroke-width="1.300"/></svg>
<div class="a" style="left:1875px;top:52px;width:32px;height:24px;border-radius:4px;background:#185abd"></div>
<svg style="left:1880px;top:57px" width="26" height="14" fill="none" stroke="#fff" stroke-width="1.100"><path d="M4.500 3.500H2Q0.700 3.500 0.700 4.800V11.500Q0.700 12.800 2 12.800H9Q10.300 12.800 10.300 11.500V10"/><path d="M3.500 9.500Q4 5 8 5V2.500L11.500 6L8 9.500V7.200Q5 7 3.500 9.500z"/><path d="M17.500 6.500l2 2l2-2"/></svg>
<!-- ribbon body -->
<div class="a" style="left:969px;top:79.500px;width:942px;height:101.500px;background:#fff;border-radius:9px;box-shadow:0 2px 5px rgba(0,0,0,.13)"></div>
<!-- ribbon: clipboard group -->
<svg style="left:990px;top:88px" width="29" height="31" fill="none">
  <path d="M5 4.500H2Q1 4.500 1 5.500V27Q1 28 2 28H14" stroke="#e8821e" stroke-width="1.400"/>
  <path d="M17 4.500H20Q21 4.500 21 5.500V12" stroke="#e8821e" stroke-width="1.400"/>
  <path d="M5.500 7V4.500Q5.500 3.500 6.500 3.500H8Q8.500 0.700 11 0.700Q13.500 0.700 14 3.500H15.500Q16.500 3.500 16.500 4.500V7z" stroke="#8a8a8a" stroke-width="1" fill="#fff"/>
  <rect x="14.300" y="12.800" width="13.200" height="16.700" rx="0.800" stroke="#3b3b3b" stroke-width="1.100" fill="#fff"/>
</svg>
<div class="t" style="left:989.500px;top:123px;font-size:12px;color:#222">粘贴</div>
<svg style="left:999px;top:141px" width="8" height="5" fill="none" stroke="#444" stroke-width="1.100"><path d="M0.700 0.700l3 3l3-3"/></svg>
<svg style="left:1031px;top:87px" width="12" height="17" fill="none" stroke="#b3b3b3" stroke-width="1"><path d="M2.500 0.500l5.500 11.500M9.500 0.500L4 12"/><circle cx="2.700" cy="13.800" r="2.200"/><circle cx="9.300" cy="13.800" r="2.200"/></svg>
<svg style="left:1029px;top:113px" width="17" height="17" fill="#fff" stroke="#b3b3b3" stroke-width="1"><path d="M0.500 0.500H6L8.500 3V12.500H0.500z"/><path d="M6.500 4.500H12.500L15.500 7.500V16H6.500z"/><path d="M12.500 4.500V7.500H15.500M9 10.500h4M9 13h4"/></svg>
<svg style="left:1029px;top:138px" width="17" height="17" fill="none"><path d="M0.700 9.500L8 5l4 5.500L6 15.500z M3 10.500l4 4" stroke="#e8821e" stroke-width="1.300"/><path d="M8 5l2-1.300l3.300 4.800L12 10" stroke="#444" stroke-width="1.100"/><path d="M10.500 4l3-3q1.500-.8 2.300.5q.6 1.200-.5 2L12.200 5.800" stroke="#444" stroke-width="1.100"/></svg>
<div class="t rl" style="left:989px">剪贴板</div>
<svg style="left:1045px;top:167px" width="9" height="9" fill="none" stroke="#444" stroke-width="1"><path d="M0.500 5V0.500H5M8.500 4v4.500H4M3 3l5.500 5.500"/></svg>
<div class="a gs" style="left:1056px"></div>
<!-- font group -->
<div class="a" style="left:1065px;top:83px;width:173px;height:24px;border:1px solid #7a7a7a;border-radius:4px;background:#fff"></div>
<div class="t" style="left:1068px;top:89px;font-size:12px;color:#111">等线 (西文正文)</div>
<svg style="left:1227px;top:93px" width="7" height="5" fill="none" stroke="#2b2b2b" stroke-width="1.350"><path d="M0.500 0.600l2.800 2.800l2.800-2.800"/></svg>
<div class="a" style="left:1240px;top:83px;width:47px;height:24px;border:1px solid #7a7a7a;border-radius:4px;background:#fff"></div>
<div class="t" style="left:1244px;top:89px;font-size:12px;color:#111">11</div>
<svg style="left:1276px;top:93px" width="7" height="5" fill="none" stroke="#2b2b2b" stroke-width="1.350"><path d="M0.500 0.600l2.800 2.800l2.800-2.800"/></svg>
<div class="t" style="left:1294px;top:86.500px;font-size:7px;color:#777">wén</div>
<div class="t" style="left:1296px;top:95px;font-size:9px;color:#2b88d8">文</div>
<div class="a" style="left:1319px;top:87px;width:16px;height:16px;border:1px solid #333"></div>
<div class="t" style="left:1322px;top:89px;font-size:13px;color:#333">A</div>
<div class="t" style="left:1072px;top:113px;font-size:14px;font-weight:bold;color:#333">B</div>
<div class="t" style="left:1099px;top:113px;font-size:14px;font-style:italic;color:#333">I</div>
<div class="t" style="left:1124px;top:113px;font-size:14px;color:#333;text-decoration:underline">U</div>
<svg style="left:1144px;top:119px" width="7" height="5" fill="none" stroke="#2b2b2b" stroke-width="1.350"><path d="M0.500 0.600l2.800 2.800l2.800-2.800"/></svg>
<div class="t" style="left:1163px;top:114px;font-size:13px;color:#555">ab</div>
<div class="a" style="left:1161px;top:122px;width:18px;height:1px;background:#555"></div>
<div class="t" style="left:1192px;top:113px;font-size:14px;font-weight:bold;color:#333">x<span style="font-size:7px;color:#2b88d8;position:relative;top:3px">2</span></div>
<div class="t" style="left:1218px;top:113px;font-size:14px;font-weight:bold;color:#333">x<span style="font-size:7px;color:#2b88d8;position:relative;top:-6px">2</span></div>
<div class="a" style="left:1236px;top:112px;width:1px;height:21px;background:#d4d4d4"></div>
<div class="t" style="left:1243px;top:111px;font-size:16px;color:#333">A</div>
<svg style="left:1250px;top:118px" width="10" height="10"><rect x="1" y="3" width="7" height="4.500" transform="rotate(-40 4.500 5)" fill="#fff" stroke="#b146c2" stroke-width="1.200"/></svg>
<svg style="left:1069px;top:139px" width="17" height="17"><text x="8.500" y="14.500" font-size="18" font-weight="bold" text-anchor="middle" fill="#fff" stroke="#1e78c8" stroke-width="1.300" font-family="Liberation Sans, sans-serif">A</text></svg>
<svg style="left:1091px;top:145px" width="7" height="5" fill="none" stroke="#2b2b2b" stroke-width="1.350"><path d="M0.500 0.600l2.800 2.800l2.800-2.800"/></svg>
<svg style="left:1112px;top:138px" width="16" height="13" fill="none" stroke="#777" stroke-width="1.100"><path d="M5 9l7.500-8q1.500-.8 2.500.5q.5 1.200-.3 2L7.500 11.500z"/><path d="M5 9l2.500 2.500L3 12.800z" fill="#777"/></svg>
<div class="a" style="left:1111px;top:151px;width:16px;height:4px;background:#ffff00"></div>
<svg style="left:1135px;top:145px" width="7" height="5" fill="none" stroke="#2b2b2b" stroke-width="1.350"><path d="M0.500 0.600l2.800 2.800l2.800-2.800"/></svg>
<div class="t" style="left:1154px;top:136px;font-size:15px;color:#444">A</div>
<div class="a" style="left:1152px;top:151px;width:16px;height:4px;background:#e80000"></div>
<svg style="left:1175px;top:145px" width="7" height="5" fill="none" stroke="#2b2b2b" stroke-width="1.350"><path d="M0.500 0.600l2.800 2.800l2.800-2.800"/></svg>
<div class="t" style="left:1193px;top:140px;font-size:14px;color:#444">Aa</div>
<svg style="left:1214px;top:145px" width="7" height="5" fill="none" stroke="#2b2b2b" stroke-width="1.350"><path d="M0.500 0.600l2.800 2.800l2.800-2.800"/></svg>
<div class="a" style="left:1231px;top:136px;width:1px;height:23px;background:#d4d4d4"></div>
<div class="t" style="left:1238px;top:138px;font-size:16px;color:#444">A</div>
<svg style="left:1249px;top:140px" width="6" height="4" fill="none" stroke="#2b88d8" stroke-width="1"><path d="M0.500 3.500l2.300-2.500l2.300 2.500"/></svg>
<div class="t" style="left:1266px;top:141px;font-size:13px;color:#444">A</div>
<svg style="left:1275px;top:140px" width="6" height="4" fill="none" stroke="#2b88d8" stroke-width="1"><path d="M0.500 0.500l2.300 2.500l2.300-2.500"/></svg>
<div class="a" style="left:1286px;top:136px;width:1px;height:23px;background:#d4d4d4"></div>
<div class="a" style="left:1293px;top:139px;width:16px;height:16px;background:#c6c6c6"></div>
<div class="t" style="left:1297px;top:141px;font-size:13px;color:#444">A</div>
<div class="a" style="left:1319px;top:139px;width:16px;height:16px;border:1px solid #555;border-radius:8px"></div>
<div class="t" style="left:1321.500px;top:141.500px;font-size:11px;color:#555">字</div>
<div class="t rl" style="left:1182px">字体</div>
<svg style="left:1335px;top:167px" width="9" height="9" fill="none" stroke="#444" stroke-width="1"><path d="M0.500 5V0.500H5M8.500 4v4.500H4M3 3l5.500 5.500"/></svg>
<div class="a gs" style="left:1346px"></div>
<!-- paragraph -->
<svg style="left:1360px;top:88px" width="29" height="23" fill="none" stroke="#444" stroke-width="1"><path d="M0 1.500h28M4 6.500h20M0 11.500h28M4 16.500h20M0 21.500h28"/></svg>
<div class="t" style="left:1362px;top:120.500px;font-size:12px;color:#222">段落</div>
<svg style="left:1371px;top:138px" width="8" height="5" fill="none" stroke="#444" stroke-width="1.100"><path d="M0.700 0.700l3 3l3-3"/></svg>
<div class="a gs" style="left:1401px"></div>
<!-- styles -->
<svg style="left:1414px;top:84px" width="34" height="36"><text x="2.500" y="29.500" font-size="32" fill="#3b3b3b" stroke="#fff" stroke-width="1.100" font-family="Liberation Sans, sans-serif" textLength="19" lengthAdjust="spacingAndGlyphs">A</text></svg>
<svg style="left:1424px;top:96px" width="24" height="24" fill="none"><path d="M21.500 2.500q1.500-.8 1 1L12 15.500l-2-1.500z" fill="#fff" stroke="#666" stroke-width="1"/><path d="M10 14q3 .5 2.500 3.500q-1.500 4.500-9 4q3-1.500 3-4q.5-3 3.500-3.500z" fill="#7db5e8" stroke="#2b78c8" stroke-width="1"/></svg>
<div class="t" style="left:1419px;top:122px;font-size:12px;color:#222">样式</div>
<svg style="left:1428px;top:141px" width="8" height="5" fill="none" stroke="#444" stroke-width="1.100"><path d="M0.700 0.700l3 3l3-3"/></svg>
<div class="t rl" style="left:1411px">样式</div>
<svg style="left:1448px;top:167px" width="9" height="9" fill="none" stroke="#444" stroke-width="1"><path d="M0.500 5V0.500H5M8.500 4v4.500H4M3 3l5.500 5.500"/></svg>
<div class="a gs" style="left:1459px"></div>
<!-- editing -->
<svg style="left:1472px;top:86px" width="30" height="30" fill="none" stroke="#444" stroke-width="1.100"><circle cx="18.500" cy="11" r="10.500"/><path d="M11 18.500L0.500 29"/></svg>
<div class="t" style="left:1475px;top:120.500px;font-size:12px;color:#222">编辑</div>
<svg style="left:1484px;top:138px" width="8" height="5" fill="none" stroke="#444" stroke-width="1.100"><path d="M0.700 0.700l3 3l3-3"/></svg>
<div class="a gs" style="left:1514px"></div>
<!-- dictate -->
<svg style="left:1534px;top:87px" width="20" height="31" fill="none"><rect x="4.500" y="0.600" width="11" height="20" rx="5.500" fill="#83beec" stroke="#2b78c8" stroke-width="1.100"/><path d="M0.600 14.500q0 9.500 9.400 9.500q9.400 0 9.400-9.500M10 24v6" stroke="#444" stroke-width="1.100"/></svg>
<div class="t" style="left:1532.500px;top:123px;font-size:12px;color:#222">听写</div>
<svg style="left:1540px;top:141px" width="8" height="5" fill="none" stroke="#444" stroke-width="1.100"><path d="M0.700 0.700l3 3l3-3"/></svg>
<div class="t rl" style="left:1532px">语音</div>
<div class="a gs" style="left:1572px"></div>
<!-- editor -->
<svg style="left:1586px;top:86px" width="32" height="32" fill="none"><path d="M2 29L4 22L19 2.500L24 5.500L9 26z" fill="#fff" stroke="#185abd" stroke-width="1.600"/><path d="M2 29l7-3l-4-3z" fill="#185abd"/><path d="M20 10h9.500M16 16.500h12.500M12 23h12.500" stroke="#185abd" stroke-width="3" stroke-linecap="round"/></svg>
<div class="t" style="left:1596px;top:122.500px;font-size:12px;color:#222">编</div>
<div class="t" style="left:1590px;top:137.500px;font-size:12px;color:#222">辑器</div>
<div class="t rl" style="left:1584px">编辑器</div>
<div class="a gs" style="left:1630px"></div>
<!-- add-ins -->
<svg style="left:1646px;top:88px" width="28" height="28" fill="none" stroke="#d83b01" stroke-width="1.200"><rect x="0.600" y="0.600" width="26.800" height="26.800"/><rect x="4" y="4" width="8.500" height="8.500"/><rect x="15.500" y="4" width="8.500" height="8.500"/><rect x="4" y="15.500" width="8.500" height="8.500"/><rect x="15.500" y="15.500" width="8.500" height="8.500"/></svg>
<div class="t" style="left:1654px;top:122.500px;font-size:12px;color:#222">加</div>
<div class="t" style="left:1648px;top:137.500px;font-size:12px;color:#222">载项</div>
<div class="t rl" style="left:1642px">加载项</div>
<div class="a gs" style="left:1688px"></div>
<svg style="left:1890px;top:164px" width="12" height="7" fill="none" stroke="#333" stroke-width="1.200"><path d="M0.700 0.700l5 5l5-5"/></svg>
<!-- document canvas -->
<div class="a" style="left:1035px;top:198px;width:793px;height:862px;background:#fff;border:1px solid #c6c6c6"></div>
<!-- crop marks -->
<div class="a" style="left:1131px;top:292px;width:24px;height:1px;background:#b9b9b9"></div>
<div class="a" style="left:1154px;top:269px;width:1px;height:24px;background:#b9b9b9"></div>
<div class="a" style="left:1709px;top:292px;width:24px;height:1px;background:#b9b9b9"></div>
<div class="a" style="left:1709px;top:269px;width:1px;height:24px;background:#b9b9b9"></div>
<!-- document text -->
<div id="doc">
<span class="d gu" style="left:1155px;top:298px">马晓亭</span><span class="d" style="left:1206px;top:298px">(2013).</span><span class="d" style="left:1252px;top:298px">"</span><span class="d" style="left:1258px;top:298px;letter-spacing:.07px">大数据时代图书馆数据长期可用性保障研究.</span><span class="d" style="left:1542px;top:298px">"</span><span class="d" style="left:1553px;top:298px">现代情报</span><span class="d" style="left:1619px;top:298px;font-weight:bold">33</span><span class="d" style="left:1638px;top:298px">(12):</span><span class="d" style="left:1671px;top:298px">62-</span>
<span class="d" style="left:1155px;top:322px">64.</span><span class="d pm" style="left:1176px;top:323px">↵</span>
<span class="d gu" style="left:1155px;top:357px">宁乐锋</span><span class="d" style="left:1206px;top:357px">(2002).</span><span class="d" style="left:1252px;top:357px">"</span><span class="d" style="left:1258px;top:357px">人本管理中</span><span class="d" style="left:1333px;top:357px">“</span><span class="d" style="left:1338px;top:357px">人</span><span class="d" style="left:1352px;top:357px">”</span><span class="d" style="left:1357px;top:357px">的探析及其管理启示.</span><span class="d" style="left:1494px;top:357px">"</span><span class="d" style="left:1505px;top:357px">广西社会科学</span><span class="d" style="left:1600px;top:357px;font-weight:bold">0</span><span class="d" style="left:1612px;top:357px">(1).</span><span class="d pm" style="left:1633px;top:358px">↵</span>
<span class="d" style="left:1155px;top:391px">赵伶俐</span><span class="d" style="left:1206px;top:391px">(2013).</span><span class="d" style="left:1252px;top:391px">"</span><span class="d" style="left:1258px;top:391px">基于</span><span class="d gu" style="left:1288px;top:391px">云计算</span><span class="d" style="left:1332px;top:391px">与大数据的高等教育质量指数建构——技术、理论、机制.</span><span class="d" style="left:1703px;top:391px">"</span>
<span class="d" style="left:1155px;top:415px">复旦教育论坛</span><span class="d" style="left:1250px;top:415px;font-weight:bold">11</span><span class="d" style="left:1270px;top:415px">(6):</span><span class="d" style="left:1294px;top:415px">52-57.</span><span class="d pm" style="left:1337px;top:416px">↵</span>
<i class="sp" style="left:1201px;top:305px"></i><i class="sp" style="left:1250px;top:305px"></i><i class="sp" style="left:1547px;top:305px"></i><i class="sp" style="left:1615px;top:305px"></i><i class="sp" style="left:1637px;top:305px"></i><i class="sp" style="left:1668px;top:305px"></i><i class="sp" style="left:1201px;top:364px"></i><i class="sp" style="left:1250px;top:364px"></i><i class="sp" style="left:1499px;top:364px"></i><i class="sp" style="left:1595px;top:364px"></i><i class="sp" style="left:1609px;top:364px"></i><i class="sp" style="left:1201px;top:398px"></i><i class="sp" style="left:1250px;top:398px"></i><i class="sp" style="left:1709px;top:398px"></i><i class="sp" style="left:1245px;top:422px"></i><i class="sp" style="left:1268px;top:422px"></i><i class="sp" style="left:1291px;top:422px"></i>
</div>
<!-- word status bar -->
<div class="a" style="left:962px;top:1057px;width:958px;height:23px;background:#f0f0f0"></div>
<div class="t ws" style="left:971px;letter-spacing:.45px">第 1 页，共 1 页</div>
<div class="t ws" style="left:1081px;letter-spacing:.4px">106 个字</div>
<svg style="left:1150px;top:1061.500px" width="15" height="14" fill="none" stroke="#444" stroke-width="1"><path d="M0.500 0.500H8L9.500 2V8M0.500 0.500V12.500H6"/><path d="M8.500 8l5 5M13.500 8l-5 5"/></svg>
<div class="t ws" style="left:1182px">英语(美国)</div>
<div class="t ws" style="left:1256px">文本预测: 打开</div>
<svg style="left:1354px;top:1061.500px" width="16" height="14" fill="none" stroke="#444" stroke-width="1"><rect x="0.500" y="0.500" width="13" height="11" rx="1"/><path d="M0.500 3.500h13M3 6.500h3"/><circle cx="10.500" cy="9.500" r="3" fill="#f0f0f0"/><circle cx="10.500" cy="9.500" r="1" fill="#444"/></svg>
<svg style="left:1455px;top:1061.500px" width="16" height="14" fill="none" stroke="#444" stroke-width="1"><path d="M7 9.500H0.500V0.500H12.500V5"/><circle cx="10.500" cy="9.500" r="2.500"/><path d="M10.500 5.500v1.500M10.500 12v1.500M6.500 9.500h1.500M13 9.500h1.500M4 12.500h3"/></svg>
<div class="t ws" style="left:1472px">显示器设置</div>
<svg style="left:1549px;top:1061.500px" width="16" height="14" fill="none" stroke="#444" stroke-width="1"><path d="M0.500 4V0.500H4M12 0.500h3.500V4M15.500 10v3.500H12M4 13.500H0.500V10"/><path d="M4.500 3.500H9L11.500 6V11.500H4.500z"/></svg>
<div class="t ws" style="left:1567px">专注</div>
<svg style="left:1615px;top:1061.500px" width="16" height="14" fill="none" stroke="#444" stroke-width="1"><path d="M7.500 1.500Q4 0 0.500 1.500V12.500Q4 11 7.500 12.500zM8.500 1.500Q12 0 15.500 1.500V12.500Q12 11 8.500 12.500z"/><path d="M2.500 4h3M2.500 6.500h3M2.500 9h3M10.500 4h3M10.500 6.500h3M10.500 9h3"/></svg>
<div class="a" style="left:1643px;top:1058px;width:40px;height:22px;background:#dcdcdc"></div>
<svg style="left:1656px;top:1061.500px" width="14" height="14" fill="none" stroke="#333" stroke-width="1"><rect x="0.500" y="0.500" width="12" height="13"/><path d="M2.500 3.500h8M2.500 6h8M2.500 8.500h8M2.500 11h8"/></svg>
<svg style="left:1695px;top:1061.500px" width="17" height="14" fill="none" stroke="#444" stroke-width="1"><rect x="0.500" y="0.500" width="13" height="12"/><path d="M0.500 3.500h13M2.500 6h6M2.500 8.500h4"/><circle cx="12" cy="10" r="3.500" fill="#f0f0f0"/><path d="M8.500 10h7M12 6.500q-2 3.500 0 7q2-3.500 0-7"/></svg>
<div class="a" style="left:1729px;top:1068px;width:8px;height:1px;background:#444"></div>
<div class="a" style="left:1742px;top:1068px;width:100px;height:1px;background:#8a8a8a"></div>
<div class="a" style="left:1790px;top:1063px;width:5px;height:11px;background:#555"></div>
<div class="a" style="left:1847px;top:1068px;width:9px;height:1px;background:#444"></div><div class="a" style="left:1851px;top:1064px;width:1px;height:9px;background:#444"></div>
<div class="t ws" style="left:1868px">100%</div>
<div class="a" style="left:960px;top:1079px;width:960px;height:1px;background:#777"></div>
<!-- ===== context menu ===== -->
<div class="a" id="menu" style="left:601px;top:343px;width:262px;height:487px;background:#fff;border:1px solid #a0a0a0;box-shadow:3px 3px 3px rgba(0,0,0,.45)">
<div class="a" style="left:0;top:0;width:32px;height:485px;background:#efefef"></div>
</div>
<div class="a hl" style="left:604px;top:600px;width:255px;height:23px"></div>
<div class="t mi" style="left:641px;top:350px;color:#111">新建题录 (N)</div>
<svg style="left:850px;top:353px" width="5" height="8"><polygon points="0,0 4,3.500 0,7.500" fill="#111"/></svg>
<div class="t mi" style="left:641px;top:374px;color:#8d8d8d">编辑题录 (E)</div>
<div class="t mi" style="left:641px;top:396px;color:#8d8d8d">为题录新增笔记 (R)...</div>
<div class="t mi" style="left:641px;top:420px;color:#111">从文件夹删除 (D)</div>
<div class="t mi" style="left:641px;top:442px;color:#111">从所有文件夹中删除 (S)</div>
<div class="t mi" style="left:641px;top:466px;color:#111">从指定文件夹删除 (F)...</div>
<div class="t mi" style="left:641px;top:498px;color:#111">翻译默认字段</div>
<div class="t mi" style="left:641px;top:522px;color:#111">翻译设置...</div>
<div class="t mi" style="left:641px;top:558px;color:#111">标为已读</div>
<div class="t mi" style="left:641px;top:582px;color:#111">星标与优先级 (P)</div>
<svg style="left:850px;top:584px" width="5" height="8"><polygon points="0,0 4,3.500 0,7.500" fill="#111"/></svg>
<div class="t mi" style="left:641px;top:605px;color:#111">复制题录 (C)</div>
<svg style="left:850px;top:608px" width="5" height="8"><polygon points="0,0 4,3.500 0,7.500" fill="#111"/></svg>
<div class="t mi" style="left:641px;top:628px;color:#111">在线更新 (O)</div>
<svg style="left:850px;top:630px" width="5" height="8"><polygon points="0,0 4,3.500 0,7.500" fill="#111"/></svg>
<div class="t mi" style="left:641px;top:651px;color:#111">下载全文 (U)</div>
<svg style="left:850px;top:654px" width="5" height="8"><polygon points="0,0 4,3.500 0,7.500" fill="#111"/></svg>
<div class="t mi" style="left:641px;top:674px;color:#8d8d8d">添加附件 (K)</div>
<svg style="left:850px;top:676px" width="5" height="8"><polygon points="0,0 4,3.500 0,7.500" fill="#8d8d8d"/></svg>
<div class="t mi" style="left:641px;top:697px;color:#111">从附件中识别标题</div>
<div class="t mi" style="left:641px;top:730px;color:#111">选择题录 (T)</div>
<svg style="left:850px;top:732px" width="5" height="8"><polygon points="0,0 4,3.500 0,7.500" fill="#111"/></svg>
<div class="t mi" style="left:641px;top:764px;color:#111">移动到文件夹 (M)...</div>
<div class="t mi" style="left:641px;top:786px;color:#111">链接到文件夹 (L)...</div>
<div class="t mi" style="left:641px;top:810px;color:#111">复制到数据库 (C)...</div>
<div class="a" style="left:637px;top:488px;width:223px;height:1px;background:#9db3e0"></div>
<div class="a" style="left:637px;top:544px;width:223px;height:1px;background:#9db3e0"></div>
<div class="a" style="left:637px;top:719px;width:223px;height:1px;background:#9db3e0"></div>
<div class="a" style="left:637px;top:752px;width:223px;height:1px;background:#9db3e0"></div>
<svg style="left:613px;top:559px" width="10" height="10"><circle cx="5" cy="5" r="4" fill="#fff" stroke="#5a5a5a" stroke-width="1"/></svg>
<div class="a" style="left:857px;top:596px;width:251px;height:52px;background:#fff;border:1px solid #a0a0a0;box-shadow:2px 2px 3px rgba(0,0,0,.3)"><div class="a" style="left:0;top:0;width:27px;height:50px;background:#efefef"></div></div>
<div class="a hl" style="left:860px;top:600px;width:246px;height:23px"></div>
<div class="t mi" style="left:893px;top:605px">格式化复制 (F)</div>
<div class="t mi" style="left:893px;top:628px;letter-spacing:.45px">复制 BibTeX 引用</div>
<!-- ===== annotation overlay ===== -->
<svg style="left:0;top:0;pointer-events:none" width="1920" height="1080" fill="none">
  <rect x="250.400" y="613.500" width="241.200" height="66.500" stroke="#1673d1" stroke-width="2.200"/>
  <rect x="850.300" y="593.600" width="264.600" height="34" stroke="#1673d1" stroke-width="2.200"/>
  <rect x="1146" y="287.700" width="570.700" height="157.300" stroke="#1673d1" stroke-width="2.200"/>
  <path d="M493 647H822Q830 647 830 639V619Q830 611 838 611H848" stroke="#2e75b6" stroke-width="1.600"/>
  <path d="M843 605.500L849 611L843 616.500" stroke="#2e75b6" stroke-width="1.600"/>
  <path d="M1116 610.500H1424Q1432 610.500 1432 602.500V449" stroke="#2e75b6" stroke-width="1.600"/>
  <path d="M1426.500 454.500L1432 448.500L1437.500 454.500" stroke="#2e75b6" stroke-width="1.600"/>
</svg>
</body>
</html>
